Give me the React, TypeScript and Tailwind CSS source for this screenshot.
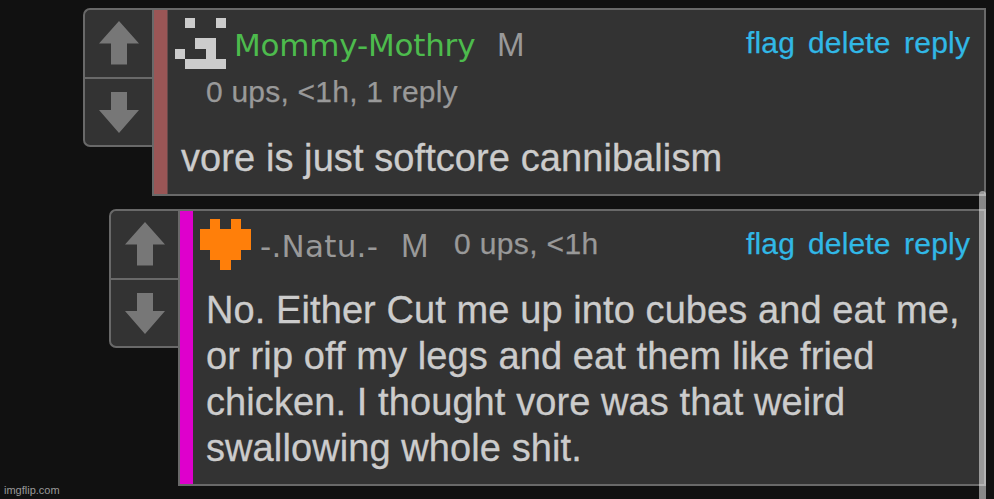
import React from "react";

const SANS = "font-['Liberation_Sans',Arial,sans-serif]";
const VERDANA = "font-['DejaVu_Sans',Verdana,sans-serif]";

function VoteBox() {
  return (
    <div className="flex h-[139px] w-[69px] shrink-0 flex-col rounded-l-[7px] border-2 border-r-0 border-[#696969] bg-[#333]">
      <div className="flex h-[69px] justify-center border-b-2 border-[#696969] pt-[11px]">
        <svg width="40" height="44" viewBox="0 0 40 44" fill="#777">
          <path d="M20 0L40 22.5H28V43.5H12V22.5H0Z" />
        </svg>
      </div>
      <div className="flex justify-center pt-[13px]">
        <svg width="40" height="41" viewBox="0 0 40 41" fill="#777">
          <path d="M12 0H28V18H40L20 41L0 18H12Z" />
        </svg>
      </div>
    </div>
  );
}

function PixelIcon({ rows, color }: { rows: string[]; color: string }) {
  return (
    <svg width="51" height="51" viewBox="0 0 5 5" fill={color} shapeRendering="crispEdges" className="shrink-0">
      {rows.flatMap((row, y) =>
        [...row].map((cell, x) => (cell === "#" ? <rect key={`${x}-${y}`} x={x} y={y} width="1" height="1" /> : null))
      )}
    </svg>
  );
}

function Actions() {
  return (
    <div className="ml-auto mr-[14px] mt-[15px] flex gap-[13px] text-[30px] leading-[36px] text-[#31b8e6] [-webkit-text-stroke:0.25px]">
      <a className="w-[49px] whitespace-nowrap tracking-[0.15px]">flag</a>
      <a className="w-[83px] whitespace-nowrap tracking-[0.15px]">delete</a>
      <a className="w-[66px] whitespace-nowrap tracking-[0.25px]">reply</a>
    </div>
  );
}

export default function App() {
  return (
    <div className={`relative h-[499px] w-[994px] overflow-hidden bg-[#111] pt-[8px] ${SANS}`}>
      <div className="flex h-[188px] pl-[83px]">
        <VoteBox />
        <div className="flex w-[834px] border-2 border-[#696969] bg-[#333]">
          <div className="w-[14px] shrink-0 border-r border-[#664a4a] bg-[#9a5656]" />
          <div className="flex-1">
            <div className="flex h-[64px] pl-[7px]">
              <div className="pt-[8px]">
                <PixelIcon color="#cccccc" rows={[".#..#", ".....", "..##.", "#..#.", ".####"]} />
              </div>
              <span className={`ml-[8px] mt-[17px] w-[240px] whitespace-nowrap text-[31px] leading-[36px] tracking-[-0.2px] text-[#4dbb4d] ${VERDANA}`}>Mommy-Mothry</span>
              <span className="ml-[23px] mt-[17px] text-[33px] leading-[36px] text-[#999]">M</span>
              <Actions />
            </div>
            <div className="ml-[38px] whitespace-nowrap text-[30px] leading-[36px] tracking-[0.22px] text-[#999] [-webkit-text-stroke:0.25px]">0 ups, &lt;1h, 1 reply</div>
            <div className="ml-[13px] mt-[25px] whitespace-nowrap text-[38px] leading-[46px] tracking-[0.08px] text-[#ccc] [-webkit-text-stroke:0.3px]">vore is just softcore cannibalism</div>
          </div>
        </div>
      </div>

      <div className="mt-[13px] flex h-[277px] pl-[109px]">
        <VoteBox />
        <div className="flex w-[808px] border-2 border-[#696969] bg-[#333]">
          <div className="w-[13px] shrink-0 bg-[#de00cc]" />
          <div className="flex-1">
            <div className="flex h-[76px] pl-[7px]">
              <div className="pt-[8px]">
                <PixelIcon color="#ff7f0a" rows={[".#.#.", "#####", "#####", ".###.", "..#.."]} />
              </div>
              <span className={`ml-[9px] mt-[17px] w-[119px] whitespace-nowrap text-[31px] leading-[36px] tracking-[0.25px] text-[#999] ${VERDANA}`}>-.Natu.-</span>
              <span className="ml-[22px] mt-[17px] w-[27px] text-[33px] leading-[36px] text-[#999]">M</span>
              <span className="ml-[26px] mt-[15px] whitespace-nowrap text-[30px] leading-[36px] tracking-[0.35px] text-[#999] [-webkit-text-stroke:0.25px]">0 ups, &lt;1h</span>
              <Actions />
            </div>
            <div className="ml-[13px] whitespace-nowrap text-[38px] leading-[46px] tracking-[0.09px] text-[#ccc] [-webkit-text-stroke:0.3px]">
              <div>No. Either Cut me up into cubes and eat me,</div>
              <div>or rip off my legs and eat them like fried</div>
              <div>chicken. I thought vore was that weird</div>
              <div>swallowing whole shit.</div>
            </div>
          </div>
        </div>
      </div>

      <div className="absolute left-[979px] top-[191px] h-[308px] w-[7px] rounded-t-[4px] bg-white/50" />
      <div className="absolute left-[4px] top-[484px] text-[11px] leading-[13px] text-[#999]">imgflip.com</div>
    </div>
  );
}
